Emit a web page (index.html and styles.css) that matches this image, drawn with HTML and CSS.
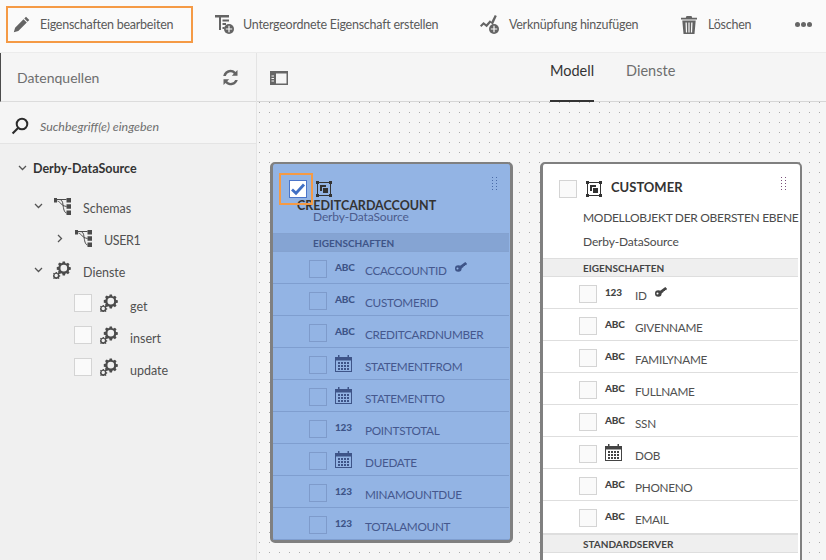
FILE: index.html
```html
<!DOCTYPE html>
<html lang="de">
<head>
<meta charset="utf-8">
<title>Datenmodell</title>
<link rel="stylesheet" href="styles.css">
</head>
<body>
<svg class="defs" width="0" height="0" aria-hidden="true">
  <defs>
    <symbol id="gears" viewBox="0 0 20 20">
      <path fill-rule="evenodd" d="M10.700.5h2.600l.4 1.900 1.300.5 1.600-1 1.800 1.800-1 1.600.5 1.300 1.900.4v2.600l-1.900.4-.5 1.300 1 1.600-1.800 1.800-1.600-1-1.300.5-.4 1.900h-2.600l-.4-1.900-1.300-.5-1.600 1-1.800-1.800 1-1.600-.5-1.300-1.900-.4V6.700l1.900-.4.5-1.300-1-1.600 1.800-1.800 1.600 1 1.300-.5zM12 4.300a3.700 3.700 0 1 0 0 7.400 3.700 3.700 0 0 0 0-7.400z"/>
      <path fill-rule="evenodd" d="M2.900 12.200h1.400l.2 1 .8.300.9-.5 1 1-.5.9.3.8 1 .2v1.400l-1 .2-.3.8.5.9-1 .7-.9-.5-.8.3-.2.7H2.900l-.2-.7-.8-.3-.9.5-.9-.7.5-.9-.3-.8-.3-.2v-1.400l.3-.2.3-.8-.5-.9.9-1 .9.5.8-.3zM3.600 14.300a1.900 1.900 0 1 0 0 3.800 1.900 1.900 0 0 0 0-3.800z"/>
      <path fill="none" stroke="currentColor" stroke-width=".8" d="M5.500 12.500l2-2.500"/>
    </symbol>
    <symbol id="schema" viewBox="0 0 17 17">
      <path d="M0 0h3v4.500H0zM12.500 0H17v4.500h-4.500zM12.500 6.300H17v4.500h-4.500zM12.500 12.500H17V17h-4.500z"/>
      <path fill="none" stroke="currentColor" stroke-width="1" d="M3 1.500h2c2.500 0 3.500 1.500 4 5 .4 4 1.200 8.200 3.500 8.500M3.500 3c3 1 3.500 4.500 9 5.500M5 1.500h7.500"/>
    </symbol>
    <symbol id="cal" viewBox="0 0 17 17">
      <path fill-rule="evenodd" d="M3 0h1.500v2h8V0H14v2h3v15H0V2h3zM1 5.500V16h15V5.500z"/>
      <path d="M3 7h2v2H3zM6 7h2v2H6zM9 7h2v2H9zM12 7h2v2h-2zM3 10h2v2H3zM6 10h2v2H6zM9 10h2v2H9zM12 10h2v2h-2zM3 13h2v2H3zM6 13h2v2H6zM9 13h2v2H9zM12 13h2v2h-2z"/>
    </symbol>
    <symbol id="key" viewBox="0 0 12 10">
      <path fill-rule="evenodd" d="M3.300 3.200a3.300 3.300 0 1 1 0 6.600 3.300 3.300 0 0 1 0-6.600zM2.500 5.600a1 1 0 1 0 0 2 1 1 0 0 0 0-2z"/>
      <path d="M4.500 4.300L10.300 0 12 1.800l-.8 1.400-1-.3-.3 1.100-1-.1-.4 1L6 6.800z"/>
    </symbol>
    <symbol id="model" viewBox="0 0 16 16">
      <path fill-rule="evenodd" d="M0 0h3v1h10V0h3v3h-1v10h1v3h-3v-1H3v1H0v-3h1V3H0zM2 3v10h1v1h10v-1h1V3h-1V2H3v1z"/>
      <path d="M4 4h6v2H6v4H4z"/><path d="M7 7h5v5H7z"/>
    </symbol>
    <symbol id="grip" viewBox="0 0 5 14">
      <path d="M0 0h1v1H0zM4 0h1v1H4zM0 3h1v1H0zM4 3h1v1H4zM0 6h1v1H0zM4 6h1v1H4zM0 9h1v1H0zM4 9h1v1H4zM0 12h1v1H0zM4 12h1v1H4z"/>
    </symbol>
  </defs>
</svg>

<div class="app">
  <header class="toolbar">
    <button class="tool tool-edit">
      <svg class="tool-icon pencil" viewBox="0 0 17 17"><path d="M13 .8l3.300 3.300-1.700 1.700-3.300-3.300zM10.500 3.300l3.300 3.300-8.500 8.400-4.500 1.300 1.300-4.500z"/></svg>
      <span>Eigenschaften bearbeiten</span>
    </button>
    <button class="tool tool-child">
      <svg class="tool-icon wide" viewBox="0 0 19 19"><path fill-rule="evenodd" d="M0 0h14v2.500H0zM4 2.500h2V15H4zM7.500 4.500H14v2H7.500zM7.500 8h3.500v2H7.500zM7.500 12h2v2h-2z"/><circle cx="14" cy="14" r="5"/><path fill="#fafafa" d="M13.400 10.800h1.200v2.600h2.600v1.200h-2.600v2.600h-1.200v-2.600h-2.600v-1.200h2.600z"/></svg>
      <span>Untergeordnete Eigenschaft erstellen</span>
    </button>
    <button class="tool tool-link">
      <svg class="tool-icon wide" viewBox="0 0 19 19"><path d="M0 10.500l3.500-3.500 2.800 2.200 3.600-4 1.500 1.500L14.800 0l2 1-4 8.800-2.200-2-3.900 4.400-3-2.400L1.300 12z"/><circle cx="14" cy="14" r="5"/><path fill="#fafafa" d="M13.400 10.800h1.200v2.600h2.600v1.200h-2.600v2.600h-1.200v-2.600h-2.600v-1.200h2.600z"/></svg>
      <span>Verknüpfung hinzufügen</span>
    </button>
    <button class="tool tool-del">
      <svg class="tool-icon trash" viewBox="0 0 16 18"><path fill-rule="evenodd" d="M5.500 0h5l.7 1.800H16v1.700H0V1.800h4.800zM1.300 4.500h13.400L13.500 18h-11zM4.500 6.500l.4 10h1.200l-.3-10zM7.400 6.500v10h1.200v-10zM10.200 6.500l-.3 10h1.200l.4-10z"/></svg>
      <span>Löschen</span>
    </button>
    <div class="more"><i></i><i></i><i></i></div>
  </header>

  <div class="main">
    <aside class="side">
      <div class="side-head">
        <span>Datenquellen</span>
        <svg class="refresh" viewBox="0 0 17 17"><path d="M8.500.8c2 0 3.700.8 5 2.100L15.500 1v5.700H9.800l2-2A4.800 4.800 0 0 0 3.800 7H1.200A7.400 7.400 0 0 1 8.500.8zM1.500 10.300h5.700l-2 2a4.800 4.800 0 0 0 8-1.300h2.600a7.400 7.400 0 0 1-12.300 3.100L1.500 16z"/></svg>
      </div>
      <div class="search">
        <svg class="search-icon" viewBox="0 0 18 18"><circle cx="11" cy="7" r="5.300" fill="none" stroke="currentColor" stroke-width="2"/><path d="M6.300 10.200l1.500 1.500-5.500 5.500-1.500-1.500z"/></svg>
        <span>Suchbegriff(e) eingeben</span>
      </div>
      <div class="tree">
        <div class="node n-root"><svg class="chev" viewBox="0 0 9 6"><path d="M1 1l3.500 3.500L8 1"/></svg><b>Derby-DataSource</b></div>
        <div class="node n-schema"><svg class="chev" viewBox="0 0 9 6"><path d="M1 1l3.500 3.500L8 1"/></svg><svg class="ti"><use href="#schema"/></svg><span>Schemas</span></div>
        <div class="node n-user"><svg class="chev side-chev" viewBox="0 0 6 9"><path d="M1 1l3.500 3.500L1 8"/></svg><svg class="ti"><use href="#schema"/></svg><span>USER1</span></div>
        <div class="node n-serv"><svg class="chev" viewBox="0 0 9 6"><path d="M1 1l3.500 3.500L8 1"/></svg><svg class="ti gear"><use href="#gears"/></svg><span>Dienste</span></div>
        <div class="node n-leaf"><i class="box"></i><svg class="ti gear"><use href="#gears"/></svg><span>get</span></div>
        <div class="node n-leaf"><i class="box"></i><svg class="ti gear"><use href="#gears"/></svg><span>insert</span></div>
        <div class="node n-leaf"><i class="box"></i><svg class="ti gear"><use href="#gears"/></svg><span>update</span></div>
      </div>
    </aside>

    <section class="work">
      <div class="tabs">
        <svg class="panel-icon" viewBox="0 0 18 14"><path fill-rule="evenodd" d="M0 0h18v14H0zM6 2.500v10h10.500v-10z"/><path fill="#f5f5f5" d="M1.500 4.500H4v1H1.500zM1.500 7H4v1H1.500zM1.500 9.500H4v1H1.500z"/></svg>
        <div class="tab-list">
          <span class="tab active">Modell</span>
          <span class="tab">Dienste</span>
        </div>
      </div>
      <div class="canvas">
        <article class="card selected">
          <svg class="grip"><use href="#grip"/></svg>
          <div class="sel-head">
            <div class="sel-top">
              <i class="box checked"><svg viewBox="0 0 16 16"><path d="M2 8.500l4 3.800L14 3.500" fill="none" stroke="currentColor" stroke-width="2.800"/></svg></i>
              <svg class="model"><use href="#model"/></svg>
            </div>
            <div class="title t-over">CREDITCARDACCOUNT</div>
            <div class="sub">Derby-DataSource</div>
            <div class="focus-ring"></div>
          </div>
          <div class="sec">EIGENSCHAFTEN</div>
          <div class="row"><i class="box"></i><span class="ty">ABC</span><span class="nm">CCACCOUNTID</span><svg class="key"><use href="#key"/></svg></div>
          <div class="row"><i class="box"></i><span class="ty">ABC</span><span class="nm">CUSTOMERID</span></div>
          <div class="row"><i class="box"></i><span class="ty">ABC</span><span class="nm">CREDITCARDNUMBER</span></div>
          <div class="row"><i class="box"></i><svg class="cal"><use href="#cal"/></svg><span class="nm">STATEMENTFROM</span></div>
          <div class="row"><i class="box"></i><svg class="cal"><use href="#cal"/></svg><span class="nm">STATEMENTTO</span></div>
          <div class="row"><i class="box"></i><span class="ty">123</span><span class="nm">POINTSTOTAL</span></div>
          <div class="row"><i class="box"></i><svg class="cal"><use href="#cal"/></svg><span class="nm">DUEDATE</span></div>
          <div class="row"><i class="box"></i><span class="ty">123</span><span class="nm">MINAMOUNTDUE</span></div>
          <div class="row"><i class="box"></i><span class="ty">123</span><span class="nm">TOTALAMOUNT</span></div>
        </article>

        <article class="card plain">
          <svg class="grip"><use href="#grip"/></svg>
          <div class="plain-head">
            <div class="sel-top">
              <i class="box"></i>
              <svg class="model"><use href="#model"/></svg>
              <div class="title">CUSTOMER</div>
            </div>
            <div class="sub s1">MODELLOBJEKT DER OBERSTEN EBENE</div>
            <div class="sub s2">Derby-DataSource</div>
          </div>
          <div class="sec">EIGENSCHAFTEN</div>
          <div class="row"><i class="box"></i><span class="ty">123</span><span class="nm">ID</span><svg class="key"><use href="#key"/></svg></div>
          <div class="row"><i class="box"></i><span class="ty">ABC</span><span class="nm">GIVENNAME</span></div>
          <div class="row"><i class="box"></i><span class="ty">ABC</span><span class="nm">FAMILYNAME</span></div>
          <div class="row"><i class="box"></i><span class="ty">ABC</span><span class="nm">FULLNAME</span></div>
          <div class="row"><i class="box"></i><span class="ty">ABC</span><span class="nm">SSN</span></div>
          <div class="row"><i class="box"></i><svg class="cal"><use href="#cal"/></svg><span class="nm">DOB</span></div>
          <div class="row"><i class="box"></i><span class="ty">ABC</span><span class="nm">PHONENO</span></div>
          <div class="row last"><i class="box"></i><span class="ty">ABC</span><span class="nm">EMAIL</span></div>
          <div class="sec sec2">STANDARDSERVER</div>
        </article>
      </div>
    </section>
  </div>
</div>
</body>
</html>
```
FILE: styles.css
```css
* { box-sizing: border-box; }
html, body { margin: 0; height: 100%; overflow: hidden; }
body { font-family: Lato, "Liberation Sans", sans-serif; color: #4b4b4b; font-size: 13px; }
.defs { position: absolute; }
i { display: block; font-style: normal; }

.app { width: 826px; height: 560px; display: flex; flex-direction: column; overflow: hidden; background: #f5f5f5; }

.toolbar { height: 53px; flex: none; display: flex; align-items: center; background: #fafafa; border-bottom: 1px solid #ececec; padding: 0 0 3px 6px; }
.tool { display: flex; align-items: center; flex: none; height: 37px; padding: 0; border: 0; background: none; font: inherit; font-size: 12.500px; letter-spacing: -.25px; color: #5a5a5a; white-space: nowrap; text-align: left; }
.tool-icon { width: 18px; height: 18px; fill: #646464; flex: none; }
.tool-icon.wide { width: 19px; height: 19px; }
.tool-icon.pencil { width: 17px; height: 17px; }
.tool-icon.trash { width: 16px; height: 18px; }
.tool-edit { width: 187px; border: 2px solid #f59a45; padding-left: 5px; gap: 10px; }
.tool-child { width: 222px; margin-left: 22px; gap: 9px; }
.tool-link { width: 157px; margin-left: 43px; gap: 10px; }
.tool-del { width: 70px; margin-left: 44px; gap: 11px; }
.more { display: flex; gap: 1px; margin-left: 44px; }
.more i { width: 5px; height: 5px; border-radius: 50%; background: #666; }

.main { flex: 1; min-height: 0; display: flex; }

.side { width: 257px; flex: none; background: #f0f0f0; border-right: 1px solid #e4e4e4; display: flex; flex-direction: column; }
.side-head { height: 49px; flex: none; display: flex; align-items: center; justify-content: space-between; padding: 0 17px 0 16px; background: #f5f5f5; border-left: 1px solid #4b4b4b; border-bottom: 1px solid #dcdcdc; font-size: 14px; color: #6e6e6e; }
.refresh { width: 17px; height: 17px; fill: #646464; }
.search { height: 42px; flex: none; display: flex; align-items: center; padding: 7px 0 0 11px; gap: 11px; background: #f5f5f5; border-bottom: 1px solid #e4e4e4; font-style: italic; font-size: 12.400px; color: #6e6e6e; }
.search-icon { width: 18px; height: 18px; fill: #2c2c2c; color: #2c2c2c; flex: none; }
.tree { flex: 1; padding-top: 8px; }
.node { height: 32px; display: flex; align-items: center; color: #505050; font-size: 12.500px; }
.chev { width: 9px; height: 6px; fill: none; stroke: #555; stroke-width: 1.300; flex: none; }
.side-chev { width: 6px; height: 9px; }
.ti { width: 17px; height: 17px; fill: #4b4b4b; color: #4b4b4b; flex: none; }
.gear { width: 18px; height: 18px; }
.n-root { padding-left: 18px; gap: 6px; margin-bottom: 6px; color: #333; }
.n-schema { padding-left: 34px; }
.n-schema .ti { margin-left: 11px; }
.n-schema span { margin: 4px 0 0 12px; }
.n-user { padding-left: 57px; }
.n-user .ti { margin-left: 12px; }
.n-user span { margin: 5px 0 0 12px; letter-spacing: -.4px; }
.n-serv { padding-left: 34px; margin-bottom: 1px; }
.n-serv .ti { margin-left: 10px; }
.n-serv span { margin: 4px 0 0 12px; }
.n-leaf { padding-left: 74px; }
.n-leaf .ti { margin-left: 8px; }
.n-leaf span { margin: 6px 0 0 12px; }
.box { width: 18px; height: 18px; flex: none; background: #fafafa; border: 1px solid #d4d4d4; }

.work { flex: 1; min-width: 0; display: flex; flex-direction: column; }
.tabs { height: 49px; flex: none; display: flex; background: #f5f5f5; border-bottom: 1px solid #d6d6d6; padding-left: 13px; }
.panel-icon { width: 18px; height: 14px; fill: #666; margin-top: 18px; flex: none; }
.tab-list { display: flex; gap: 32px; margin-left: 262px; }
.tab { display: block; height: 49px; padding-top: 9px; font-size: 14.500px; color: #6e6e6e; }
.tab.active { color: #333; border-bottom: 2px solid #333; }

.canvas { flex: 1; min-height: 0; display: flex; align-items: flex-start; gap: 27px; padding: 60px 0 0 13px; overflow: hidden;
  background-color: #f5f5f5;
  background-image: linear-gradient(to right, #f5f5f5 9px, transparent 9px), linear-gradient(to bottom, #f5f5f5 9px, #ababab 9px);
  background-size: 10px 10px;
  background-position: 3px 1px; }

.card { position: relative; flex: none; border: 3px solid #808080; border-top-width: 2px; border-radius: 5px; background: #fff; }
.card.selected { width: 243px; height: 381px; background: #93b4e4; padding-right: 1px; }
.card.plain { width: 262px; height: 420px; padding-right: 2px; border-right-width: 2px; }
.grip { position: absolute; right: 13px; top: 13px; width: 5px; height: 14px; fill: #6f6f6f; }
.plain .grip { fill: #7a4f7a; right: 14px; }
.selected .grip { fill: #4a6ba8; }

.sel-head { position: relative; height: 69px; padding: 16px 0 0 16px; }
.sel-top { display: flex; align-items: center; }
.model { width: 16px; height: 16px; fill: #333; margin-left: 9px; flex: none; }
.title { font-weight: 700; font-size: 12.500px; color: #333; line-height: 14px; white-space: nowrap; }
.t-over { margin: 1px 0 0 8px; }
.sub { font-size: 12px; letter-spacing: -.15px; line-height: 14px; color: #4b5c8d; }
.selected .sub { margin: -3px 0 0 24px; }
.focus-ring { position: absolute; left: 6px; top: 9px; width: 34px; height: 32px; border: 2px solid #f59a45; }

.plain-head { height: 94px; padding: 16px 0 0 16px; }
.plain .title { margin: -4px 0 0 9px; font-size: 13px; }
.plain .sub { color: #4b4b4b; white-space: nowrap; }
.plain .s1 { margin: 13px 0 0 24px; letter-spacing: -.3px; }
.plain .s2 { margin: 10px 0 0 24px; }

.sec { height: 19px; display: flex; align-items: center; padding-left: 40px; font-size: 10px; font-weight: 700; color: #444; background: #efefef; border-top: 1px solid #dedede; border-bottom: 1px solid #dedede; }
.selected .sec { background: #85a4d3; color: #3e5488; border-color: #84a2d0; }
.row { height: 32px; display: flex; align-items: flex-start; padding-left: 36px; border-bottom: 1px solid #dedede; }
.selected .row { border-color: #7f9ecf; }
.row .box { margin-top: 8px; }
.selected .row .box { background: transparent; border-color: #7e9bcb; }
.ty { width: 18px; margin: 8px 0 0 8px; font-size: 10px; letter-spacing: -.2px; font-weight: 900; color: #444; line-height: 14px; flex: none; }
.cal { width: 17px; height: 17px; margin: 7px 1px 0 8px; fill: #444; flex: none; }
.selected .ty { color: #3e5488; }
.selected .cal { fill: #3e5488; }
.nm { margin: 11px 0 0 12px; font-size: 11.750px; letter-spacing: -.3px; line-height: 16px; color: #505050; }
.selected .nm { color: #45588e; }
.key { width: 12px; height: 10px; margin: 10px 0 0 8px; fill: #444; }
.selected .key { fill: #3e5488; }
.row.last { border-bottom: 0; }
.sec2 { height: 20px; border-top-width: 2px; }

.box.checked { background: #fff; border: 1px solid #4b75c9; color: #3f6fc4; }
.box.checked svg { display: block; width: 16px; height: 16px; }
```
